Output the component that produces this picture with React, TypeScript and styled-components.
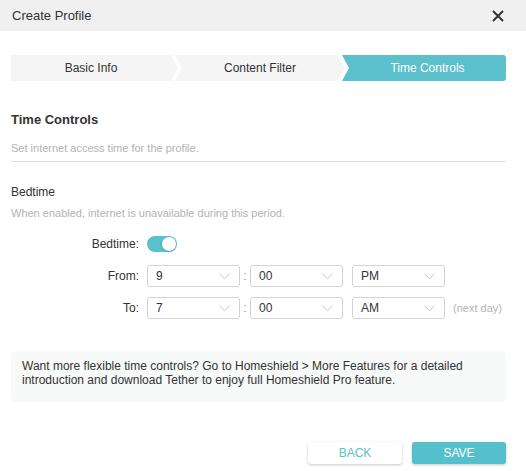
import styled, { createGlobalStyle } from 'styled-components';

const GlobalStyle = createGlobalStyle`
  html, body {
    margin: 0;
    padding: 0;
    background: #fff;
  }
  body {
    font-family: "Liberation Sans", Arial, sans-serif;
    color: #333;
  }
`;

const TEAL = '#5bc0cc';

const Dialog = styled.div`
  width: 526px;
  height: 471px;
  display: flex;
  flex-direction: column;
  background: #fff;
  overflow: hidden;
`;

const Header = styled.div`
  height: 31px;
  flex-shrink: 0;
  background: #f0f0f0;
  display: flex;
  align-items: center;
  justify-content: space-between;
  padding: 0 22px 0 12px;
`;

const Title = styled.div`
  font-size: 13px;
  color: #333;
`;

const CloseButton = styled.button`
  border: 0;
  background: none;
  padding: 0;
  width: 12px;
  height: 12px;
  display: flex;
  cursor: pointer;
`;

const Body = styled.div`
  padding: 24px 20px 0 11px;
  display: flex;
  flex-direction: column;
`;

const Stepper = styled.div`
  display: flex;
  height: 26px;
`;

const Step = styled.div<{ $active?: boolean; $first?: boolean; $last?: boolean; $w: number }>`
  width: ${p => p.$w}px;
  flex-shrink: 0;
  margin-left: ${p => (p.$first ? 0 : -3)}px;
  display: flex;
  align-items: center;
  justify-content: center;
  font-size: 12px;
  background: ${p => (p.$active ? TEAL : '#f5f5f5')};
  color: ${p => (p.$active ? '#fff' : '#333')};
  border-radius: ${p => (p.$first ? '3px 0 0 3px' : p.$last ? '0 3px 3px 0' : '0')};
  clip-path: ${p =>
    p.$first
      ? 'polygon(0 0, calc(100% - 7px) 0, 100% 50%, calc(100% - 7px) 100%, 0 100%)'
      : p.$last
        ? 'polygon(0 0, 100% 0, 100% 100%, 0 100%, 7px 50%)'
        : 'polygon(0 0, calc(100% - 7px) 0, 100% 50%, calc(100% - 7px) 100%, 0 100%, 7px 50%)'};
  padding-left: ${p => (p.$first ? 0 : 7)}px;
  padding-right: ${p => (p.$last ? 0 : 7)}px;
  box-sizing: border-box;
`;

const SectionTitle = styled.div`
  margin-top: 31px;
  font-size: 13px;
  line-height: 16px;
  font-weight: bold;
  color: #333;
`;

const Hint = styled.div<{ $mt: number }>`
  margin-top: ${p => p.$mt}px;
  font-size: 11px;
  line-height: 14px;
  color: #b3b3b3;
`;

const Divider = styled.div`
  margin-top: 6px;
  height: 1px;
  background: #dedede;
`;

const SubTitle = styled.div`
  margin-top: 22px;
  font-size: 12px;
  line-height: 16px;
  color: #333;
`;

const Form = styled.div`
  margin-top: 13px;
  display: grid;
  grid-template-columns: 128px auto;
  grid-auto-rows: 22px;
  column-gap: 8px;
  row-gap: 10px;
  align-items: center;
`;

const Label = styled.div`
  text-align: right;
  font-size: 12px;
  line-height: 22px;
  color: #333;
`;

const Controls = styled.div`
  display: flex;
  align-items: center;
  height: 22px;
`;

const Toggle = styled.div<{ $on: boolean }>`
  width: 30px;
  height: 16px;
  border-radius: 8px;
  background: ${p => (p.$on ? TEAL : '#ccc')};
  position: relative;
  &::after {
    content: '';
    position: absolute;
    top: 1px;
    left: ${p => (p.$on ? 15 : 1)}px;
    width: 14px;
    height: 14px;
    border-radius: 50%;
    background: #fff;
    box-shadow: 0 1px 2px rgba(0, 0, 0, 0.2);
  }
`;

const Select = styled.div`
  width: 93px;
  height: 22px;
  box-sizing: border-box;
  border: 1px solid #d3d3d3;
  border-radius: 3px;
  display: flex;
  align-items: center;
  justify-content: space-between;
  padding: 0 9px 0 8px;
  font-size: 12px;
  color: #333;
`;

const Colon = styled.span`
  width: 10px;
  text-align: center;
  font-size: 12px;
  color: #999;
`;

const Spacer = styled.span`
  width: 9px;
`;

const NextDay = styled.span`
  margin-left: 8px;
  font-size: 11px;
  color: #b3b3b3;
`;

const InfoBox = styled.div`
  margin-top: 32px;
  background: #f8f9f9;
  border-radius: 4px;
  padding: 8px 11px 15px;
  font-size: 12px;
  line-height: 14px;
  color: #333;
`;

const Footer = styled.div`
  margin-top: 40px;
  display: flex;
  justify-content: flex-end;
  gap: 10px;
`;

const Button = styled.button<{ $primary?: boolean }>`
  width: 94px;
  height: 22px;
  border: 0;
  border-radius: 3px;
  font-family: "Liberation Sans", Arial, sans-serif;
  font-size: 12px;
  text-transform: uppercase;
  background: ${p => (p.$primary ? '#55bfcc' : '#fff')};
  color: ${p => (p.$primary ? '#fff' : TEAL)};
  box-shadow: 0 1px 3px rgba(0, 0, 0, 0.22);
  cursor: pointer;
`;

const Chevron = () => (
  <svg width="11" height="7" viewBox="0 0 11 7">
    <path d="M0.5 0.8 L5.5 5.8 L10.5 0.8" fill="none" stroke="#c2c2c2" strokeWidth="1" />
  </svg>
);

const Dropdown = ({ value }: { value: string }) => (
  <Select>
    <span>{value}</span>
    <Chevron />
  </Select>
);

const steps = [
  { name: 'Basic Info', w: 167 },
  { name: 'Content Filter', w: 170 },
  { name: 'Time Controls', w: 164 },
];

export default function App() {
  return (
    <>
      <GlobalStyle />
      <Dialog>
        <Header>
          <Title>Create Profile</Title>
          <CloseButton aria-label="close">
            <svg width="12" height="12" viewBox="0 0 12 12">
              <path d="M1 1 L11 11 M11 1 L1 11" stroke="#333" strokeWidth="2" />
            </svg>
          </CloseButton>
        </Header>
        <Body>
          <Stepper>
            {steps.map((s, i) => (
              <Step
                key={s.name}
                $w={s.w}
                $first={i === 0}
                $last={i === steps.length - 1}
                $active={i === steps.length - 1}
              >
                {s.name}
              </Step>
            ))}
          </Stepper>

          <SectionTitle>Time Controls</SectionTitle>
          <Hint $mt={13}>Set internet access time for the profile.</Hint>
          <Divider />

          <SubTitle>Bedtime</SubTitle>
          <Hint $mt={6}>When enabled, internet is unavailable during this period.</Hint>

          <Form>
            <Label>Bedtime:</Label>
            <Controls>
              <Toggle $on />
            </Controls>

            <Label>From:</Label>
            <Controls>
              <Dropdown value="9" />
              <Colon>:</Colon>
              <Dropdown value="00" />
              <Spacer />
              <Dropdown value="PM" />
            </Controls>

            <Label>To:</Label>
            <Controls>
              <Dropdown value="7" />
              <Colon>:</Colon>
              <Dropdown value="00" />
              <Spacer />
              <Dropdown value="AM" />
              <NextDay>(next day)</NextDay>
            </Controls>
          </Form>

          <InfoBox>
            Want more flexible time controls? Go to Homeshield &gt; More Features for a detailed
            introduction and download Tether to enjoy full Homeshield Pro feature.
          </InfoBox>

          <Footer>
            <Button>Back</Button>
            <Button $primary>Save</Button>
          </Footer>
        </Body>
      </Dialog>
    </>
  );
}
